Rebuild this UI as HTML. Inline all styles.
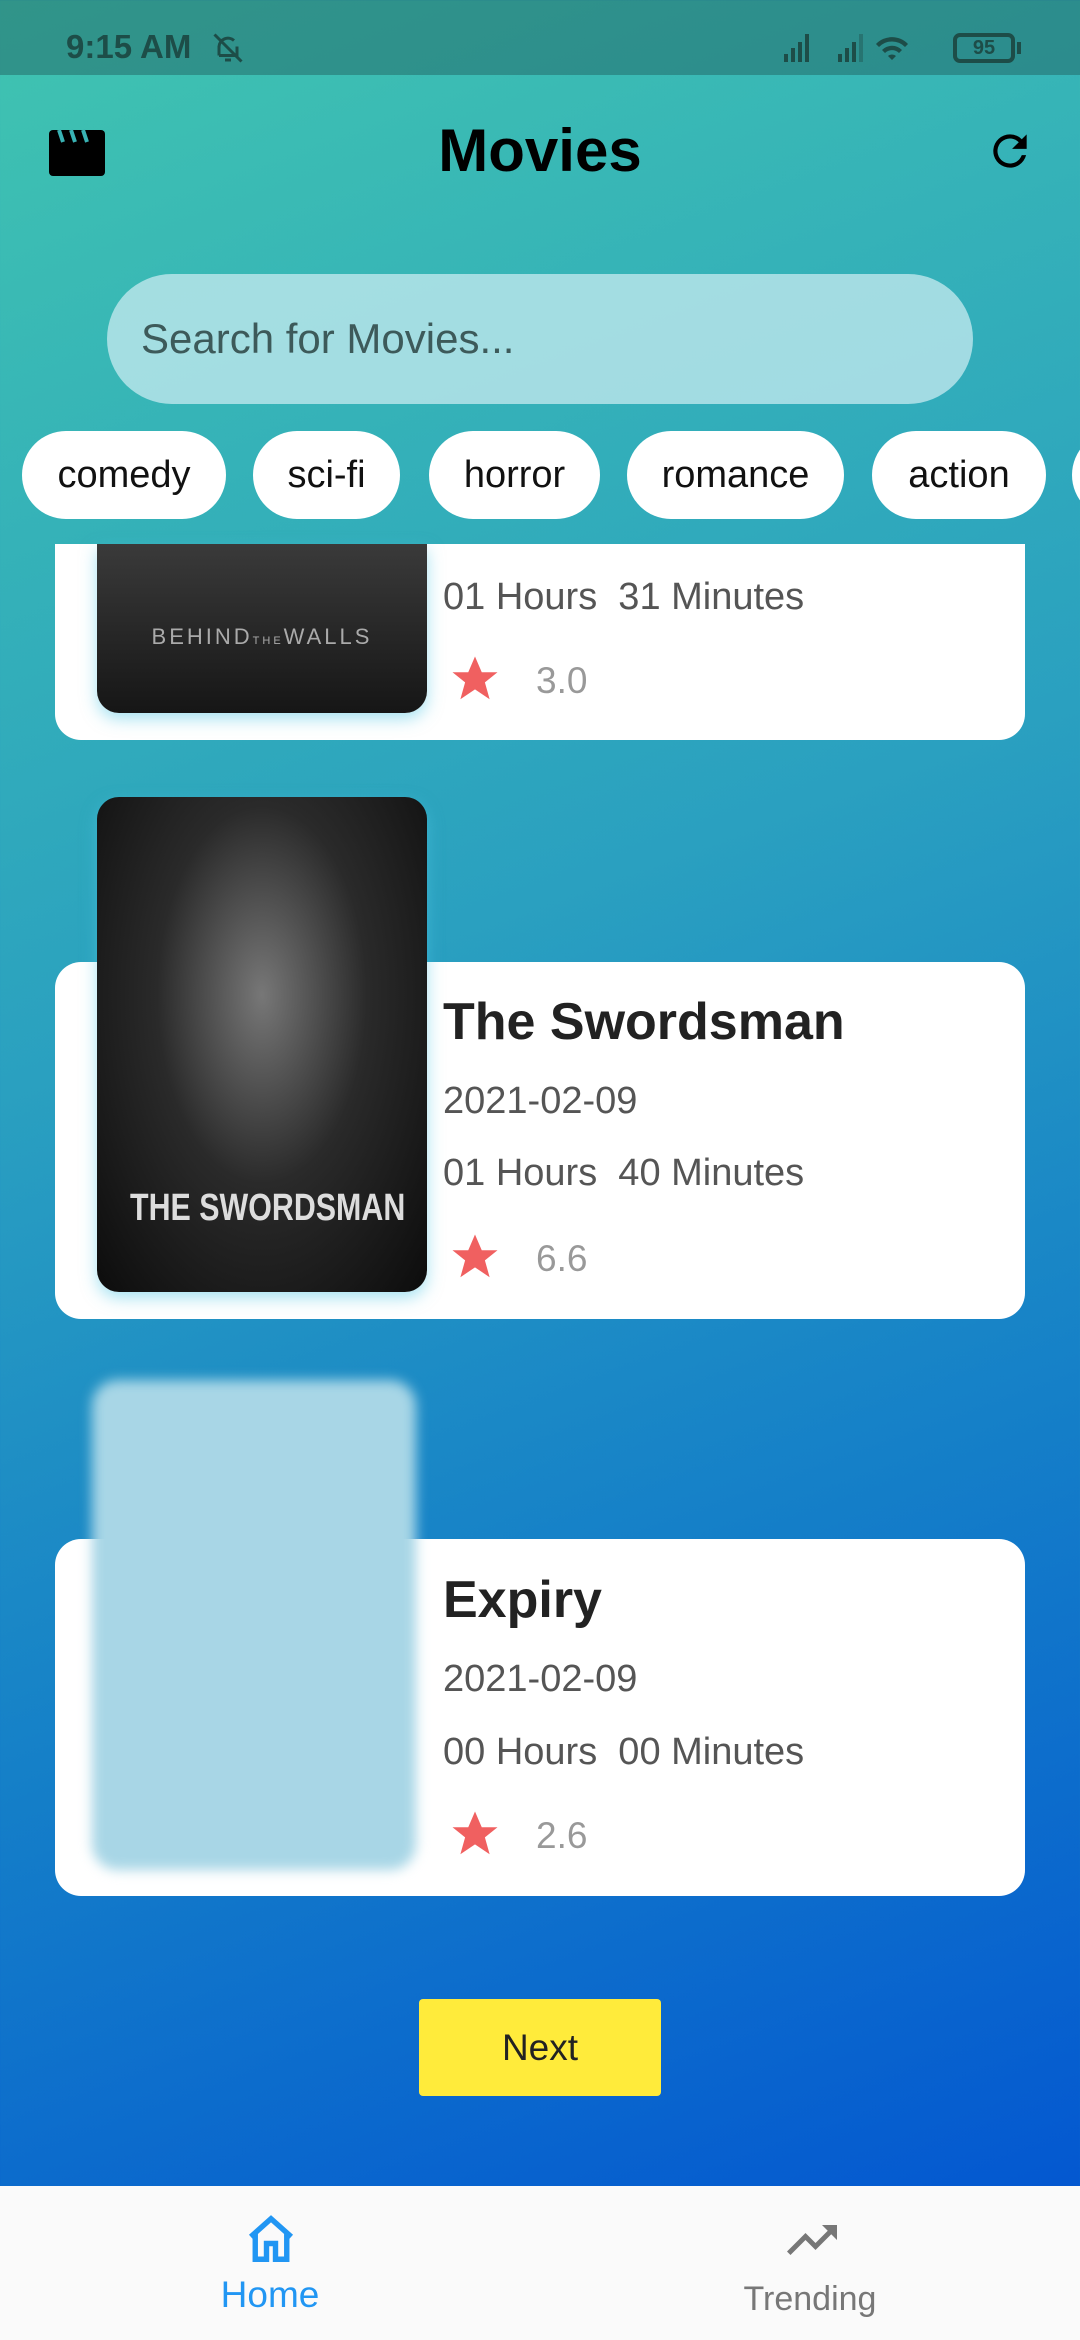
<!DOCTYPE html>
<html><head><meta charset="utf-8"><style>
*{margin:0;padding:0;box-sizing:border-box}
body{width:1080px;height:2340px;overflow:hidden;font-family:"Liberation Sans",Roboto,sans-serif;position:relative;background:linear-gradient(160deg,#40c4b0 0%,#2aa0c0 40%,#1580c8 65%,#0050d2 100%)}
.abs{position:absolute}
.status{left:0;top:0;width:1080px;height:75px;background:rgba(30,90,90,0.45)}
.chip{position:absolute;top:431px;height:88px;background:#fff;border-radius:44px;font-size:38px;color:#111;display:flex;align-items:center;justify-content:center}
.card{position:absolute;left:55px;width:970px;background:#fff;border-radius:26px}
.t{position:absolute;left:443px;color:#555;font-size:38px}
.title{position:absolute;left:443px;color:#222;font-size:52px;font-weight:bold}
.rate{position:absolute;left:536px;color:#999;font-size:37px}
.star{position:absolute;left:447px}
</style></head><body>
<div class="abs status"></div>
<div class="abs" style="left:66px;top:28px;font-size:33px;font-weight:bold;color:#1d4d48">9:15 AM</div>
<svg class="abs" style="left:210px;top:30px" width="36" height="36" viewBox="0 0 24 24" fill="none" stroke="#1d4d48" stroke-width="2"><path d="M6 17V11a6 6 0 0 1 10-4M18 11v6H6M10 20h4M3 3l18 18"/></svg>
<svg class="abs" style="left:782px;top:30px" width="130" height="34" viewBox="0 0 130 34" fill="#1d4d48"><rect x="2" y="24" width="4" height="8"/><rect x="9" y="18" width="4" height="14"/><rect x="16" y="12" width="4" height="20"/><rect x="23" y="4" width="4" height="28"/><rect x="56" y="24" width="4" height="8"/><rect x="63" y="18" width="4" height="14"/><rect x="70" y="12" width="4" height="20"/><rect x="77" y="4" width="4" height="28" opacity=".4"/><path d="M110 30l-4-4a6 6 0 0 1 8 0zM100 20a14 14 0 0 1 20 0l-3 3a10 10 0 0 0-14 0zM94 14a22 22 0 0 1 32 0l-3 3a18 18 0 0 0-26 0z"/></svg>
<div class="abs" style="left:953px;top:33px;width:62px;height:30px;border:4px solid #1d4d48;border-radius:7px;font-size:20px;font-weight:bold;color:#1d4d48;text-align:center;line-height:22px">95</div>
<div class="abs" style="left:1017px;top:42px;width:4px;height:12px;background:#1d4d48"></div>
<svg class="abs" style="left:49px;top:128px" width="56" height="48" viewBox="0 0 56 48"><path d="M0 6a4 4 0 0 1 4-4h48a4 4 0 0 1 4 4v38a4 4 0 0 1-4 4H4a4 4 0 0 1-4-4z" fill="#000"/><path d="M10 2l4 12M22 2l4 12M34 2l4 12" stroke="#39b2b4" stroke-width="4"/></svg>
<div class="abs" style="left:0;width:1080px;top:116px;text-align:center;font-size:60px;font-weight:bold;color:#000">Movies</div>
<svg class="abs" style="left:985px;top:126px" width="50" height="50" viewBox="0 0 24 24"><path d="M17.65 6.35A7.96 7.96 0 0 0 12 4a8 8 0 1 0 7.73 10h-2.08A6 6 0 1 1 12 6c1.66 0 3.14.69 4.22 1.78L13 11h7V4z" fill="#000"/></svg>
<div class="abs" style="left:107px;top:274px;width:866px;height:130px;border-radius:65px;background:rgba(200,235,240,0.75);font-size:42px;color:#3d5a5a;padding-left:34px;line-height:130px">Search for Movies...</div>
<div class="chip" style="left:22px;width:204px">comedy</div>
<div class="chip" style="left:253px;width:147px">sci-fi</div>
<div class="chip" style="left:429px;width:171px">horror</div>
<div class="chip" style="left:627px;width:217px">romance</div>
<div class="chip" style="left:872px;width:174px">action</div>
<div class="chip" style="left:1072px;width:100px"></div>
<div class="card" style="top:544px;height:196px;border-radius:0 0 26px 26px"></div>
<div class="abs" style="left:97px;top:544px;width:330px;height:169px;border-radius:0 0 22px 22px;background:linear-gradient(#3a3a3a,#161616);box-shadow:0 6px 16px rgba(80,200,230,.5)"><div style="position:absolute;top:80px;width:100%;text-align:center;color:#aaa;font-size:22px;letter-spacing:3px">BEHIND<span style="font-size:11px">THE</span>WALLS</div></div>
<div class="t" style="top:576px">01 Hours&nbsp; 31 Minutes</div>
<svg class="star" style="top:652px" width="56" height="54" viewBox="0 0 24 24"><path d="M12 2l3 7h7l-5.6 4.5 2.1 7.5L12 16.6 5.5 21l2.1-7.5L2 9h7z" fill="#f06060"/></svg>
<div class="rate" style="top:660px">3.0</div>
<div class="card" style="top:962px;height:357px"></div>
<div class="abs" style="left:97px;top:797px;width:330px;height:495px;border-radius:22px;background:radial-gradient(ellipse at 50% 40%,#777 0%,#2a2a2a 45%,#0c0c0c 100%);box-shadow:0 6px 16px rgba(80,200,230,.5);overflow:hidden"><div style="position:absolute;top:390px;left:0;width:100%;text-align:center;color:#ddd;font-size:38px;font-weight:bold;white-space:nowrap;transform:scaleX(0.8)">THE SWORDSMAN</div></div>
<div class="title" style="top:992px">The Swordsman</div>
<div class="t" style="top:1080px">2021-02-09</div>
<div class="t" style="top:1152px">01 Hours&nbsp; 40 Minutes</div>
<svg class="star" style="top:1230px" width="56" height="54" viewBox="0 0 24 24"><path d="M12 2l3 7h7l-5.6 4.5 2.1 7.5L12 16.6 5.5 21l2.1-7.5L2 9h7z" fill="#f06060"/></svg>
<div class="rate" style="top:1238px">6.6</div>
<div class="card" style="top:1539px;height:357px"></div>
<div class="abs" style="left:92px;top:1380px;width:324px;height:490px;border-radius:26px;background:#a8d6e6;filter:blur(6px)"></div>
<div class="title" style="top:1570px">Expiry</div>
<div class="t" style="top:1658px">2021-02-09</div>
<div class="t" style="top:1731px">00 Hours&nbsp; 00 Minutes</div>
<svg class="star" style="top:1807px" width="56" height="54" viewBox="0 0 24 24"><path d="M12 2l3 7h7l-5.6 4.5 2.1 7.5L12 16.6 5.5 21l2.1-7.5L2 9h7z" fill="#f06060"/></svg>
<div class="rate" style="top:1815px">2.6</div>
<div class="abs" style="left:419px;top:1999px;width:242px;height:97px;background:#ffeb3b;border-radius:4px;font-size:37px;color:#222;text-align:center;line-height:97px">Next</div>
<div class="abs" style="left:0;top:2186px;width:1080px;height:154px;background:#fafafa"></div>
<svg class="abs" style="left:244px;top:2212px" width="54" height="54" viewBox="0 0 24 24" fill="none" stroke="#2196f3" stroke-width="2.4"><path d="M3 11L12 3l9 8M5 9.5V21h5v-7h4v7h5V9.5"/></svg>
<div class="abs" style="left:0;width:540px;top:2274px;text-align:center;font-size:37px;color:#2196f3">Home</div>
<svg class="abs" style="left:782px;top:2210px" width="60" height="60" viewBox="0 0 24 24"><path d="M16 6l2.3 2.3-4.9 4.9-4-4L2 16.6 3.4 18l6-6 4 4 6.3-6.3L22 12V6z" fill="#777"/></svg>
<div class="abs" style="left:540px;width:540px;top:2280px;text-align:center;font-size:34px;color:#777">Trending</div>
</body></html>
